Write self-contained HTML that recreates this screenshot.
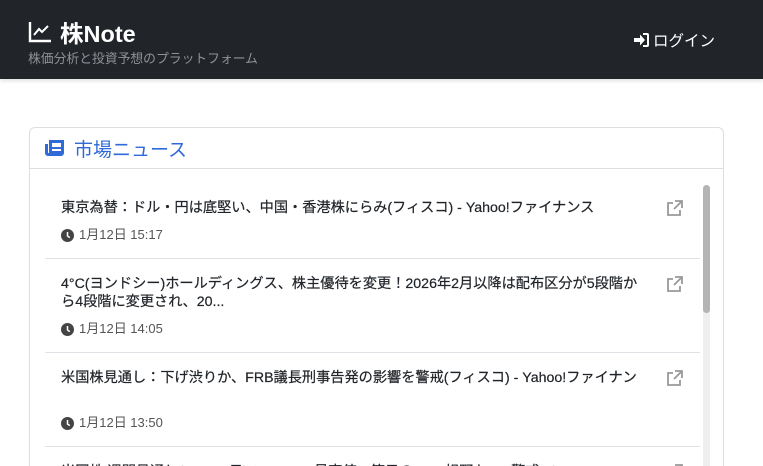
<!DOCTYPE html>
<html><head><meta charset="utf-8"><style>
*{box-sizing:border-box;margin:0;padding:0}
html,body{width:763px;height:466px;overflow:hidden}
body{background:#fff;font-family:"Liberation Sans","Noto Sans CJK JP",sans-serif;color:#212529;position:relative}
.hdr{position:absolute;left:0;top:0;width:763px;height:79px;background:#212529;box-shadow:0 2px 4px rgba(0,0,0,.12)}
.logo{position:absolute;left:28px;top:15px;color:#fff;font-size:23.5px;font-weight:bold;display:flex;align-items:center;gap:8px}
.sub{position:absolute;left:28px;top:48px;font-size:12.8px;color:#8e9297}
.login{position:absolute;left:633px;top:29px;color:#fff;font-size:15.5px;display:flex;align-items:center;gap:3px}
.card{position:absolute;left:29px;top:127px;width:695px;height:339px;border:1px solid #dcdee1;border-bottom:none;border-radius:6px 6px 0 0;overflow:hidden}
.ch{height:41px;border-bottom:1px solid #dcdee1;display:flex;align-items:center;padding-left:15px;color:#2f6ad8;font-size:19px;gap:9px}
.list{position:absolute;left:15px;top:55px;width:655px}
.item{position:relative;padding:16px 52px 14px 16px;border-bottom:1px solid #dee2e6}
.t{font-size:14.2px;line-height:18px;color:#212529;-webkit-text-stroke:0.2px #212529}
.d{margin-top:9px;font-size:13px;line-height:18px;color:#555;display:flex;align-items:center;gap:5px}
.ext{position:absolute;right:17px;top:17px}
.sb{position:absolute;left:673px;top:57px;width:7px;height:320px;background:#efefef;border-radius:3px}
.th{position:absolute;left:673px;top:57px;width:7px;height:128px;background:#b4b4b4;border-radius:4px}
</style></head><body>
<div class="hdr">
<div class="logo"><svg width="24" height="22" viewBox="0 0 24 22" fill="none" stroke="#fff" stroke-width="2.4"><path d="M2 1V20H23"/><path d="M6 14L11 8L14 11L20 5" stroke-width="2"/></svg>株Note</div>
<div class="sub">株価分析と投資予想のプラットフォーム</div>
<div class="login"><svg width="17" height="16" viewBox="0 0 17 16" fill="#fff"><path d="M10 1h4a2 2 0 0 1 2 2v10a2 2 0 0 1-2 2h-4v-2h4V3h-4z"/><path d="M1 6h6V2.5L12 8l-5 5.5V10H1z"/></svg>ログイン</div>
</div>
<div class="card">
<div class="ch"><svg width="20" height="18" viewBox="0 0 20 18" fill="#2f6ad8"><path d="M4 1h15v13a3 3 0 0 1-3 3H3a3 3 0 0 1-3-3V5h3v9h1zM7 4v4h9V4zM7 10v2h9v-2z"/></svg>市場ニュース</div>
<div class="list">
<div class="item"><div class="t">東京為替：ドル・円は底堅い、中国・香港株にらみ(フィスコ) - Yahoo!ファイナンス</div><div class="d"><svg width="13" height="13" viewBox="0 0 13 13"><circle cx="6.5" cy="6.5" r="6.5" fill="#444"/><path d="M6.5 3v4l2.3 1.6" stroke="#fff" stroke-width="1.5" fill="none"/></svg>1月12日 15:17</div><svg class="ext" width="17" height="17" viewBox="0 0 17 17" fill="none" stroke="#999" stroke-width="1.8"><path d="M7 3H2v12h12v-5"/><path d="M9 1h7v7M16 1L8 9"/></svg></div>
<div class="item"><div class="t">4°C(ヨンドシー)ホールディングス、株主優待を変更！2026年2月以降は配布区分が5段階か<br>ら4段階に変更され、20...</div><div class="d"><svg width="13" height="13" viewBox="0 0 13 13"><circle cx="6.5" cy="6.5" r="6.5" fill="#444"/><path d="M6.5 3v4l2.3 1.6" stroke="#fff" stroke-width="1.5" fill="none"/></svg>1月12日 14:05</div><svg class="ext" width="17" height="17" viewBox="0 0 17 17" fill="none" stroke="#999" stroke-width="1.8"><path d="M7 3H2v12h12v-5"/><path d="M9 1h7v7M16 1L8 9"/></svg></div>
<div class="item"><div class="t">米国株見通し：下げ渋りか、FRB議長刑事告発の影響を警戒(フィスコ) - Yahoo!ファイナン<br><span style="visibility:hidden">ス</span></div><div class="d"><svg width="13" height="13" viewBox="0 0 13 13"><circle cx="6.5" cy="6.5" r="6.5" fill="#444"/><path d="M6.5 3v4l2.3 1.6" stroke="#fff" stroke-width="1.5" fill="none"/></svg>1月12日 13:50</div><svg class="ext" width="17" height="17" viewBox="0 0 17 17" fill="none" stroke="#999" stroke-width="1.8"><path d="M7 3H2v12h12v-5"/><path d="M9 1h7v7M16 1L8 9"/></svg></div>
<div class="item"><div class="t">米国株 週間見通し(12～16日)：S&amp;P500最高値、節目の7000視野もCPI警戒 - ig.com</div><svg class="ext" width="17" height="17" viewBox="0 0 17 17" fill="none" stroke="#999" stroke-width="1.8"><path d="M7 3H2v12h12v-5"/><path d="M9 1h7v7M16 1L8 9"/></svg></div>
</div>
<div class="sb"></div><div class="th"></div>
</div>
</body></html>
